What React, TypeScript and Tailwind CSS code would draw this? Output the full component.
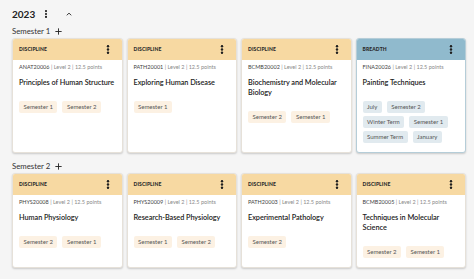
import React from "react";

type Course = {
  kind: "DISCIPLINE" | "BREADTH";
  code: string;
  title: string;
  chips: string[];
};

const sem1: Course[] = [
  { kind: "DISCIPLINE", code: "ANAT20006", title: "Principles of Human Structure", chips: ["Semester 1", "Semester 2"] },
  { kind: "DISCIPLINE", code: "PATH20001", title: "Exploring Human Disease", chips: ["Semester 1"] },
  { kind: "DISCIPLINE", code: "BCMB20002", title: "Biochemistry and Molecular Biology", chips: ["Semester 2", "Semester 1"] },
  { kind: "BREADTH", code: "FINA20026", title: "Painting Techniques", chips: ["July", "Semester 2", "Winter Term", "Semester 1", "Summer Term", "January"] },
];

const sem2: Course[] = [
  { kind: "DISCIPLINE", code: "PHYS20008", title: "Human Physiology", chips: ["Semester 2", "Semester 1"] },
  { kind: "DISCIPLINE", code: "PHYS20009", title: "Research-Based Physiology", chips: ["Semester 1", "Semester 2"] },
  { kind: "DISCIPLINE", code: "PATH20003", title: "Experimental Pathology", chips: ["Semester 2"] },
  { kind: "DISCIPLINE", code: "BCMB20005", title: "Techniques in Molecular Science", chips: ["Semester 2", "Semester 1"] },
];

function Kebab({ size = 9 }: { size?: number }) {
  return (
    <svg width={4} height={size} viewBox="0 0 4 10" fill="#1f1f1f">
      <circle cx="2" cy="1.4" r="1.35" />
      <circle cx="2" cy="5" r="1.35" />
      <circle cx="2" cy="8.6" r="1.35" />
    </svg>
  );
}

function Card({ c }: { c: Course }) {
  const breadth = c.kind === "BREADTH";
  return (
    <div
      className={
        breadth
          ? "flex flex-col rounded-[3px] overflow-hidden bg-white border border-[#b5cdd8] shadow-[0_1px_2px_rgba(0,0,0,0.18)]"
          : "flex flex-col rounded-[3px] overflow-hidden bg-white border border-[#e6e1d9] shadow-[0_1px_2px_rgba(0,0,0,0.18)]"
      }
    >
      <div
        className={
          breadth
            ? "h-[21px] flex items-center justify-between pl-[6px] pr-[12px] bg-[#90bacd]"
            : "h-[21px] flex items-center justify-between pl-[6px] pr-[12px] bg-[#f7d9a2]"
        }
      >
        <span className="text-[5px] font-black tracking-[0.1px] text-[#2a2a2a]">{c.kind}</span>
        <Kebab />
      </div>
      <div className="px-[6px] pt-[4px] pb-[9px] flex flex-col">
        <div className="text-[5.5px] leading-[7px] text-[#8a8a8a] whitespace-nowrap">
          <span className="text-[#444]">{c.code}</span> | Level 2 | 12.5 points
        </div>
        <div className="mt-[7px] text-[7.3px] leading-[10px] font-semibold tracking-[-0.05px] text-[#222]">{c.title}</div>
        <div className="mt-[13px] flex flex-wrap gap-x-[5px] gap-y-[3px]">
          {c.chips.map((ch) => (
            <span
              key={ch}
              className={
                breadth
                  ? "h-[12px] px-[4.5px] rounded-[2px] text-[6px] leading-[12px] text-[#555] bg-[#e1eaef]"
                  : "h-[12px] px-[4.5px] rounded-[2px] text-[6px] leading-[12px] text-[#555] bg-[#fcf1e3]"
              }
            >
              {ch}
            </span>
          ))}
        </div>
      </div>
    </div>
  );
}

function Section({ label, courses, mt }: { label: string; courses: Course[]; mt: string }) {
  return (
    <div className={mt}>
      <div className="flex items-center gap-[5px] h-[10px] text-[7.8px] leading-[10px] text-[#333]">
        <span>{label}</span>
        <svg width="7" height="7" viewBox="0 0 10 10" stroke="#222" strokeWidth="1.3">
          <path d="M5 0.5v9M0.5 5h9" />
        </svg>
      </div>
      <div className="mt-[2px] grid grid-cols-4 gap-[4px]">
        {courses.map((c) => (
          <Card key={c.code} c={c} />
        ))}
      </div>
    </div>
  );
}

export default function App() {
  return (
    <div className="w-[474px] h-[279px] bg-[#f5f5f5] font-['Lato',sans-serif] pl-[12px] pr-[8px] pt-[7px]">
      <div className="flex items-center h-[14px]">
        <span className="text-[10px] leading-[14px] font-bold text-[#222]">2023</span>
        <span className="ml-[9px] flex">
          <Kebab size={8} />
        </span>
        <svg className="ml-[18px]" width="6" height="4" viewBox="0 0 6 4" fill="none" stroke="#333" strokeWidth="1">
          <path d="M0.8 3.3L3 1.1l2.2 2.2" />
        </svg>
      </div>
      <Section label="Semester 1" courses={sem1} mt="mt-[5px]" />
      <Section label="Semester 2" courses={sem2} mt="mt-[8px]" />
    </div>
  );
}
